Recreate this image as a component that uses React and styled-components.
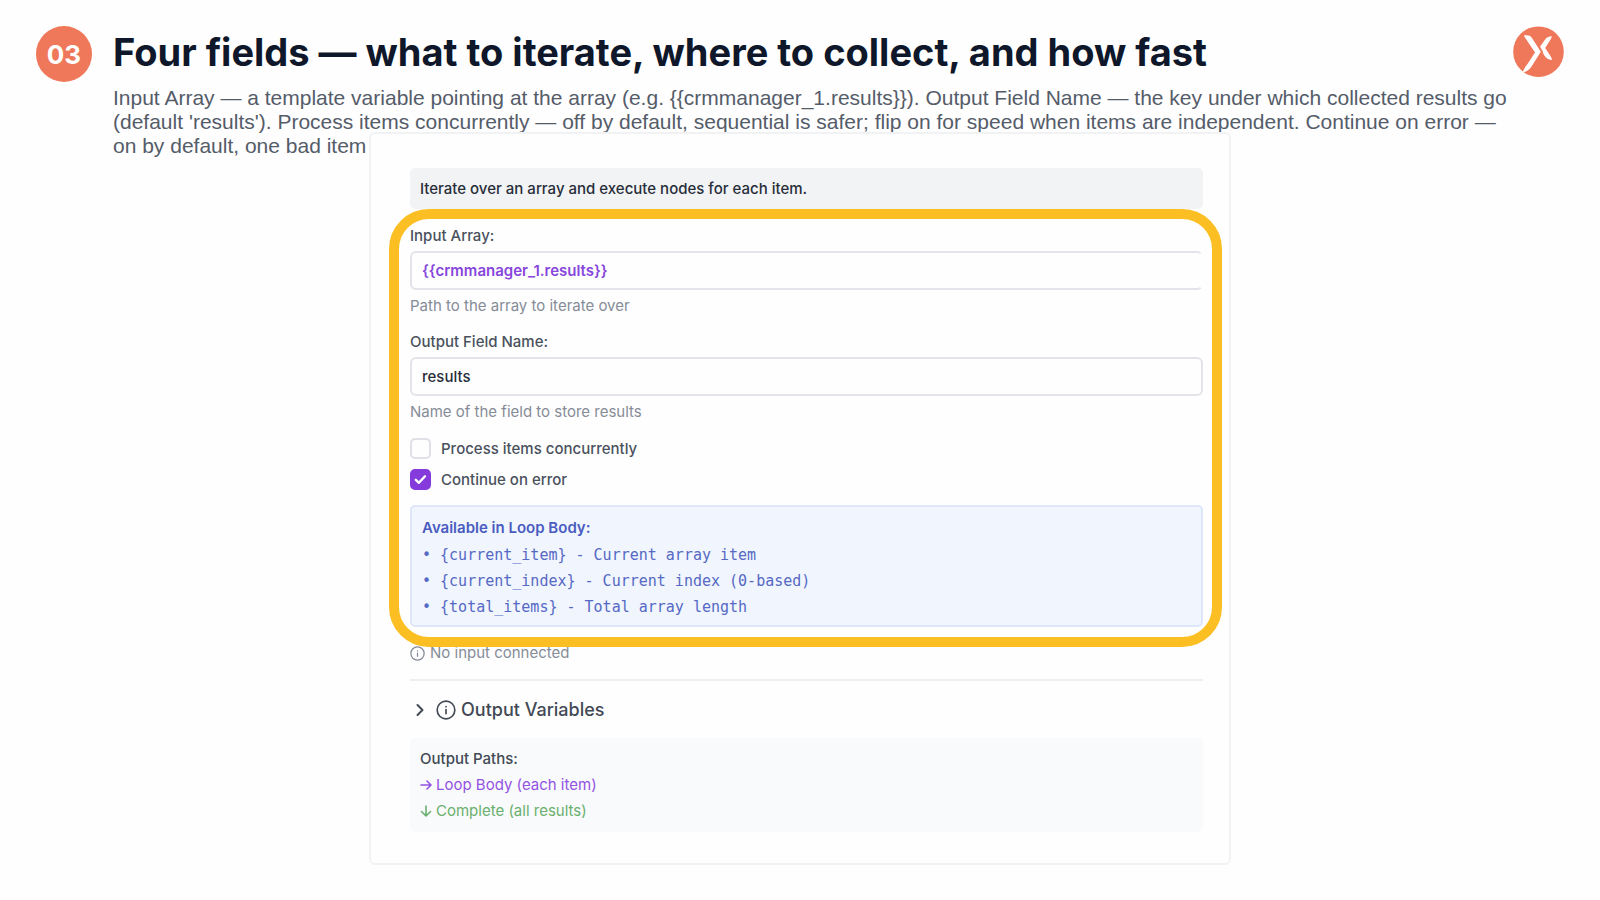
import React, { useState } from "react";
import styled, { createGlobalStyle } from "styled-components";

const GlobalStyle = createGlobalStyle`
  *, *::before, *::after { box-sizing: border-box; }
  body {
    margin: 0;
    background: #fefefe;
    color: #4b5563;
    font-family: Inter, "Liberation Sans", sans-serif;
  }
  h1, h2, p, ul { margin: 0; padding: 0; }
`;

const Slide = styled.main`
  display: flex;
  flex-direction: column;
  align-items: center;
  padding: 26px 36px 32px;
`;

const Header = styled.header`
  display: flex;
  align-items: flex-start;
  width: 100%;
`;

const StepNumber = styled.div`
  display: flex;
  flex: none;
  align-items: center;
  justify-content: center;
  width: 56px;
  height: 56px;
  margin-right: 21px;
  border-radius: 50%;
  background: #f0785a;
  color: #fff;
  font-size: 26px;
  font-weight: 700;
`;

const Heading = styled.div`
  flex: 1;
  min-width: 0;
`;

const Title = styled.h1`
  color: #0f172a;
  font-size: 38px;
  font-weight: 700;
  line-height: 52px;
`;

const Summary = styled.p`
  padding-top: 8px;
  color: #555c69;
  font-family: "Liberation Sans", sans-serif;
  font-size: 21px;
  line-height: 24px;
`;

const Logo = styled.svg`
  flex: none;
  width: 52px;
  height: 52px;
`;

const Card = styled.section`
  position: relative;
  display: flex;
  flex-direction: column;
  width: 100%;
  max-width: 862px;
  margin-top: -26px;
  padding: 34px 26px 31px 39px;
  border: 2px solid #f1f2f4;
  border-radius: 6px;
  background: #fefefe;
  font-size: 15px;
  line-height: 20px;
`;

const Intro = styled.p`
  padding: 11px 10px 10px;
  border-radius: 5px;
  background: #f2f3f5;
  color: #272e3a;
  font-weight: 500;
`;

const Fields = styled.div`
  position: relative;
  display: flex;
  flex-direction: column;
  padding-top: 17px;
`;

const Highlight = styled.div`
  position: absolute;
  inset: 0 -19px -20px -21px;
  border: 10px solid #fbbf24;
  border-radius: 40px;
  pointer-events: none;
`;

const Field = styled.div`
  display: flex;
  flex-direction: column;
  margin-bottom: 16px;
`;

const Label = styled.label`
  color: #4a515d;
  font-weight: 500;
`;

const TextInput = styled.input`
  width: 100%;
  height: 39px;
  margin: 5px 0 6px;
  padding: 0 10px;
  border: 2px solid #e2e4e9;
  border-right-color: ${(p) => (p.$openEnd ? "transparent" : "#e2e4e9")};
  border-radius: 6px;
  outline: none;
  background: #fefefe;
  color: ${(p) => (p.$variable ? "#8746dc" : "#272e3a")};
  font: ${(p) => (p.$variable ? 600 : 500)} 15px/20px Inter, sans-serif;
`;

const Hint = styled.p`
  color: #868c97;
`;

const CheckRow = styled.label`
  display: flex;
  align-items: center;
  gap: 10px;
  height: 21px;
  margin-bottom: 10px;
  color: #4a515d;
  font-weight: 500;
`;

const CheckBox = styled.span`
  position: relative;
  display: grid;
  flex: none;
  width: 21px;
  height: 21px;
  place-items: center;
`;

const CheckInput = styled.input`
  appearance: none;
  grid-area: 1 / 1;
  width: 21px;
  height: 21px;
  margin: 0;
  border: 2px solid #dfe1e6;
  border-radius: 5px;
  background: #fefefe;
  &:checked {
    border-color: #853bdb;
    background: #853bdb;
  }
`;

const CheckMark = styled.svg`
  position: relative;
  grid-area: 1 / 1;
  width: 15px;
  height: 15px;
  pointer-events: none;
`;

const LoopInfo = styled.div`
  margin-top: 5px;
  padding: 11px 10px 8px;
  border: 2px solid #dde6fb;
  border-radius: 5px;
  background: #f0f5fe;
  color: #5669c4;
`;

const LoopTitle = styled.h2`
  color: #4a5cbf;
  font-size: 15px;
  font-weight: 600;
  line-height: 20px;
`;

const LoopList = styled.ul`
  padding-top: 1px;
  list-style: none;
`;

const LoopItem = styled.li`
  padding-top: 6px;
  font-family: "DejaVu Sans Mono", "Liberation Mono", monospace;
`;

const Status = styled.div`
  display: flex;
  align-items: center;
  gap: 5px;
  margin-top: 16px;
  padding-bottom: 16px;
  border-bottom: 2px solid #eceef1;
  color: #868c97;
`;

const InfoGlyph = styled.svg`
  flex: none;
  width: ${(p) => p.$size}px;
  height: ${(p) => p.$size}px;
  fill: none;
  stroke: currentColor;
  stroke-width: 2;
  stroke-linecap: round;
`;

const Disclosure = styled.button`
  display: flex;
  align-items: center;
  gap: 5px;
  align-self: flex-start;
  margin: 17px 0 16px;
  padding: 0 4px;
  border: 0;
  background: none;
  color: #424955;
  font: 500 18px/24px Inter, sans-serif;
`;

const Chevron = styled.svg`
  width: 12px;
  height: 14px;
  margin-right: 5px;
  fill: none;
  stroke: currentColor;
  stroke-width: 2;
  stroke-linecap: round;
  stroke-linejoin: round;
`;

const Paths = styled.div`
  display: flex;
  flex-direction: column;
  gap: 6px;
  padding: 11px 10px;
  border-radius: 5px;
  background: #f9fafb;
`;

const PathsTitle = styled.h2`
  color: #424955;
  font-size: 15px;
  font-weight: 500;
  line-height: 20px;
`;

const Path = styled.p`
  display: flex;
  align-items: center;
  gap: 4px;
  color: ${(p) => p.$color};
`;

const Arrow = styled.svg`
  width: 12px;
  height: 12px;
  fill: none;
  stroke: currentColor;
  stroke-width: 1.6;
  stroke-linecap: round;
  stroke-linejoin: round;
`;

function Info({ size }) {
  return (
    <InfoGlyph $size={size} viewBox="0 0 24 24" aria-hidden="true">
      <circle cx="12" cy="12" r="10.6" />
      <path d="M12 11.5v5M12 7.8v.2" />
    </InfoGlyph>
  );
}

function Check({ label, initial }) {
  const [on, setOn] = useState(initial);
  return (
    <CheckRow>
      <CheckBox>
        <CheckInput type="checkbox" checked={on} onChange={() => setOn(!on)} />
        {on && (
          <CheckMark viewBox="0 0 15 15" aria-hidden="true">
            <path d="M2.8 7.8l3.1 3 6.1-6.5" fill="none" stroke="#fff" strokeWidth="2.4" strokeLinecap="round" strokeLinejoin="round" />
          </CheckMark>
        )}
      </CheckBox>
      {label}
    </CheckRow>
  );
}

const LOOP_VALUES = [
  "{current_item} - Current array item",
  "{current_index} - Current index (0-based)",
  "{total_items} - Total array length",
];

export default function App() {
  const [open, setOpen] = useState(false);
  return (
    <>
      <GlobalStyle />
      <Slide>
        <Header>
          <StepNumber>03</StepNumber>
          <Heading>
            <Title>Four fields — what to iterate, where to collect, and how fast</Title>
            <Summary>
              {"Input Array — a template variable pointing at the array (e.g. {{crmmanager_1.results}}). Output Field Name — the key under which collected results go (default 'results'). Process items concurrently — off by default, sequential is safer; flip on for speed when items are independent. Continue on error — on by default, one bad item"}
            </Summary>
          </Heading>
          <Logo viewBox="0 0 52 52" role="img" aria-label="Logo">
            <circle cx="26.5" cy="25.7" r="25.3" fill="#f0785a" />
            <path
              d="M12 9.500C15.500 9 18.500 9.500 20 12L28.800 25.800L20.500 39C18 43.500 15 45.800 11 46C11.500 43 13.500 40.500 15.500 38L23 26.500L16 16C14.500 13.500 12.800 12 12 9.500z"
              fill="#fff"
            />
            <path
              d="M39.800 10.300C36.500 10.300 34.500 11.500 32.800 14L27.800 21L30.600 26.200C32.500 30.500 35.500 33.800 40 34C39.500 31.500 38.500 30 37.300 28.300L33.200 22L37 16C38.300 14 39.500 12.500 39.800 10.300z"
              fill="#fff"
            />
            <path d="M27.600 20.500L30.800 26.500" stroke="#f0785a" strokeWidth="1" />
          </Logo>
        </Header>

        <Card>
          <Intro>Iterate over an array and execute nodes for each item.</Intro>

          <Fields>
            <Field>
              <Label htmlFor="input-array">Input Array:</Label>
              <TextInput id="input-array" $variable $openEnd defaultValue="{{crmmanager_1.results}}" />
              <Hint>Path to the array to iterate over</Hint>
            </Field>
            <Field>
              <Label htmlFor="output-field">Output Field Name:</Label>
              <TextInput id="output-field" defaultValue="results" />
              <Hint>Name of the field to store results</Hint>
            </Field>
            <Check label="Process items concurrently" initial={false} />
            <Check label="Continue on error" initial />
            <LoopInfo>
              <LoopTitle>Available in Loop Body:</LoopTitle>
              <LoopList>
                {LOOP_VALUES.map((value) => (
                  <LoopItem key={value}>{"• " + value}</LoopItem>
                ))}
              </LoopList>
            </LoopInfo>
            <Highlight />
          </Fields>

          <Status>
            <Info size={15} />
            No input connected
          </Status>

          <Disclosure type="button" aria-expanded={open} onClick={() => setOpen(!open)}>
            <Chevron viewBox="0 0 12 14" aria-hidden="true">
              <path d="M3.500 2L8.500 7l-5 5" />
            </Chevron>
            <Info size={20} />
            Output Variables
          </Disclosure>

          <Paths>
            <PathsTitle>Output Paths:</PathsTitle>
            <Path $color="#9353e2">
              <Arrow viewBox="0 0 12 12" aria-hidden="true">
                <path d="M1 6h10M7 2l4 4-4 4" />
              </Arrow>
              Loop Body (each item)
            </Path>
            <Path $color="#69b06e">
              <Arrow viewBox="0 0 12 12" aria-hidden="true">
                <path d="M6 1v10M1.500 6.500L6 11l4.500-4.500" />
              </Arrow>
              Complete (all results)
            </Path>
          </Paths>
        </Card>
      </Slide>
    </>
  );
}
